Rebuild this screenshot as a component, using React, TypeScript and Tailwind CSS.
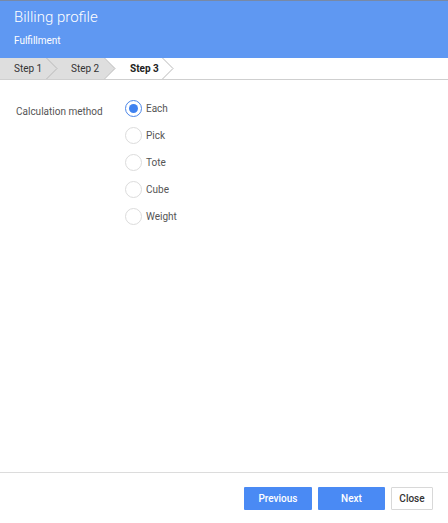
import { useState } from 'react';

const methods = ['Each', 'Pick', 'Tote', 'Cube', 'Weight'];

function Chevron({ fill, back }: { fill?: string; back: string }) {
  return (
    <svg width="12" height="21" viewBox="0 0 12 21" className="block shrink-0" style={{ background: back }}>
      {fill && <polygon points="0,0 11,10.5 0,21" fill={fill} />}
      <polyline points="0.5,0 11,10.5 0.5,21" fill="none" stroke="#b9b9b9" strokeWidth="1" />
    </svg>
  );
}

export default function App() {
  const [method, setMethod] = useState('Each');

  return (
    <div className="h-[523px] w-[448px] flex flex-col bg-white font-['Roboto',sans-serif]">
      {/* header */}
      <div className="h-[58px] bg-[#5f98f2] border-t border-[#7889a6] px-[14px] text-white">
        <div className="text-[15px] font-light leading-none mt-[9px]">Billing profile</div>
        <div className="text-[10px] leading-none mt-[11px]">Fulfillment</div>
      </div>

      {/* steps */}
      <div className="flex h-[22px] border-b border-[#cfcfcf] text-[10px] text-[#333]">
        <div className="w-[46px] bg-[#dedede] pl-[14px] flex items-center">Step 1</div>
        <Chevron back="#dedede" />
        <div className="w-[46px] bg-[#dedede] pl-[13px] flex items-center">Step 2</div>
        <Chevron fill="#dedede" back="#ffffff" />
        <div className="w-[46px] pl-[14px] flex items-center font-bold text-[#222]">Step 3</div>
        <Chevron back="#ffffff" />
      </div>

      {/* content */}
      <div className="flex-1 flex pt-[20px]">
        <div className="w-[125px] pl-[16px] pt-[4px] text-[10px] text-[#555]">Calculation method</div>
        <div className="flex flex-col gap-[10px]">
          {methods.map((m) => {
            const on = method === m;
            return (
              <label key={m} className="flex items-center gap-[4px] cursor-pointer" onClick={() => setMethod(m)}>
                <span
                  className={
                    'w-[17px] h-[17px] rounded-full border flex items-center justify-center ' +
                    (on ? 'border-[#4d87e8]' : 'border-[#dcdcdc]')
                  }
                >
                  {on && <span className="w-[9px] h-[9px] rounded-full bg-[#3f82f0]" />}
                </span>
                <span className="text-[10px] text-[#555]">{m}</span>
              </label>
            );
          })}
        </div>
      </div>

      {/* footer */}
      <div className="h-[51px] border-t border-[#dcdcdc] flex items-center justify-end gap-[6px] pr-[15px] text-[10px] font-medium">
        <button className="w-[68px] h-[23px] bg-[#4a8af4] text-white rounded-[1px]">Previous</button>
        <button className="w-[67px] h-[23px] bg-[#4a8af4] text-white rounded-[1px]">Next</button>
        <button className="w-[42px] h-[23px] bg-white border border-[#d8d8d8] text-[#333] rounded-[1px]">Close</button>
      </div>
    </div>
  );
}
